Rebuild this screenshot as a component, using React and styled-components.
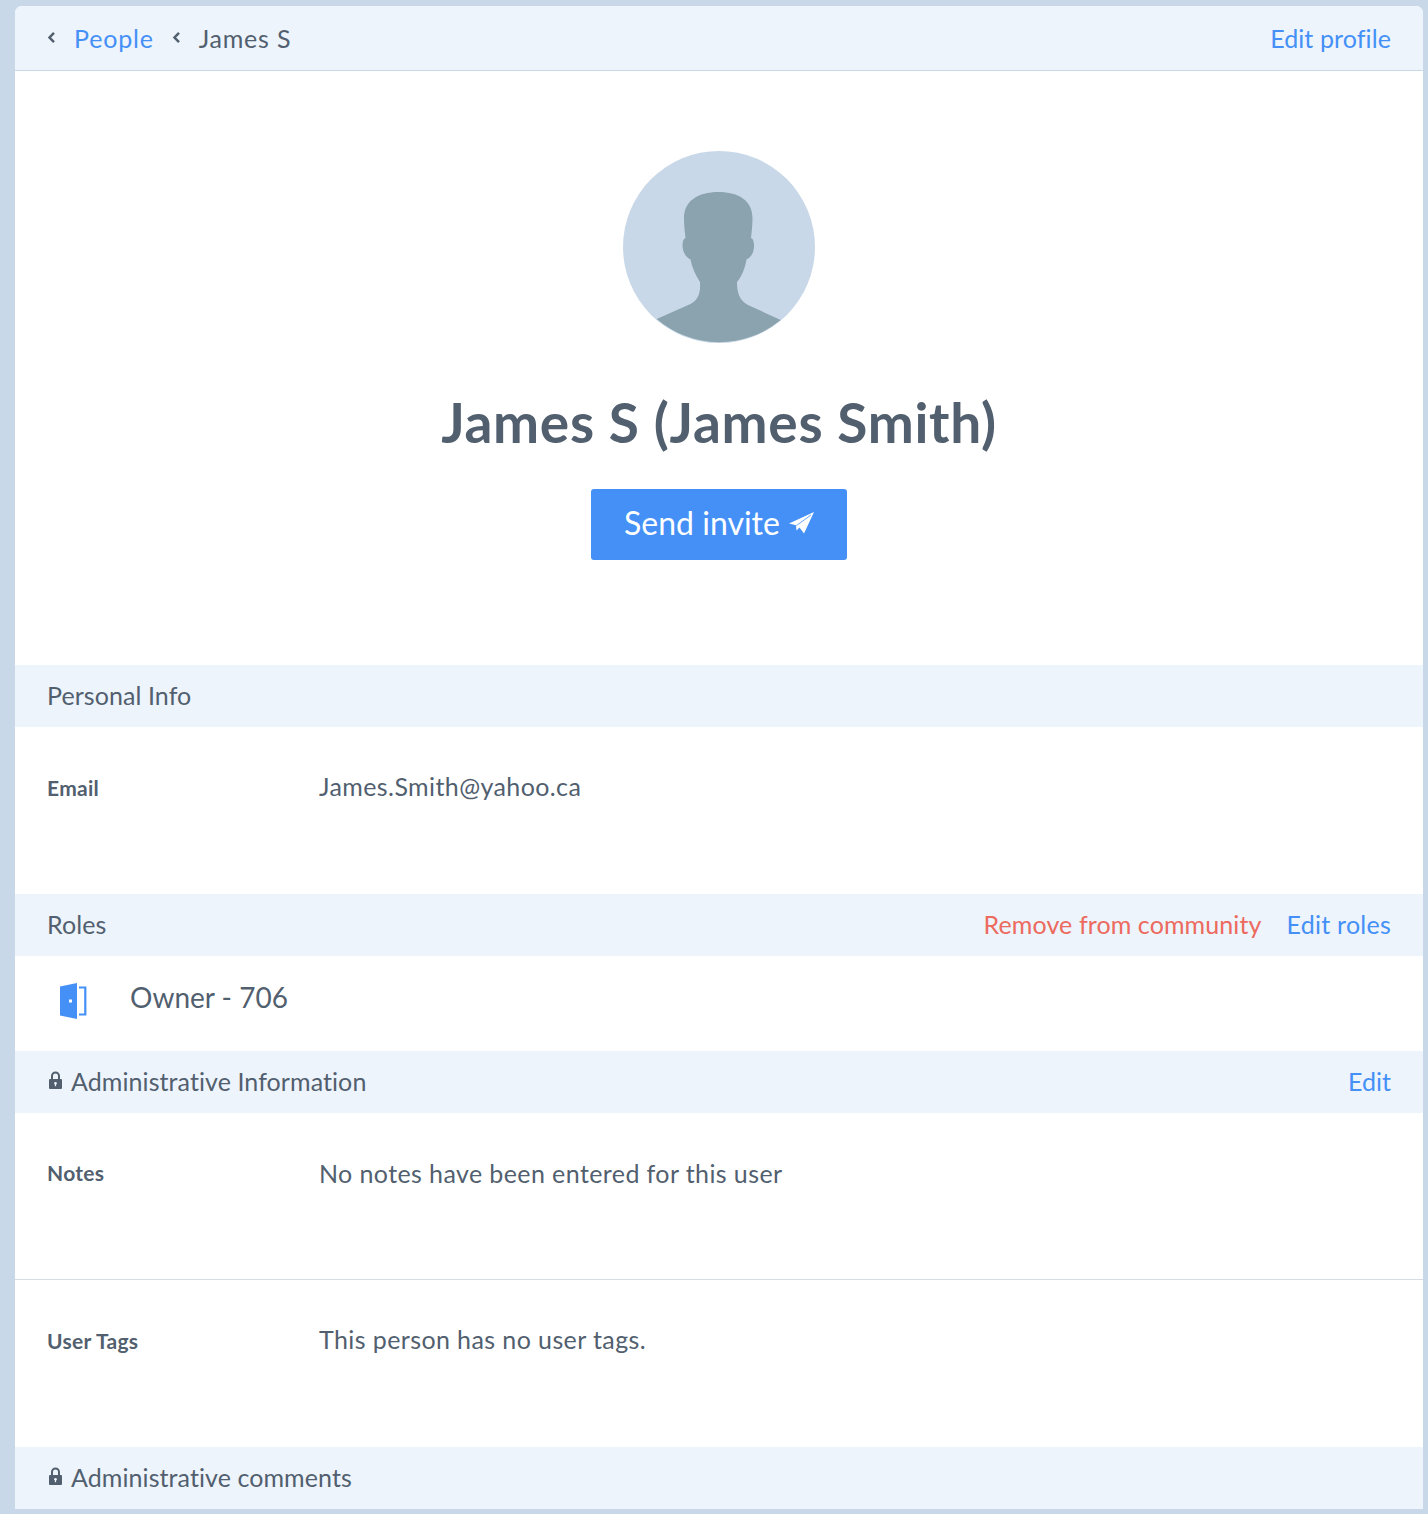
import styled, { createGlobalStyle } from "styled-components";

const GlobalStyle = createGlobalStyle`
  html, body {
    margin: 0;
    padding: 0;
    background-color: #c9d8e8;
  }
  body {
    font-family: "Lato", "Liberation Sans", sans-serif;
    font-variant-ligatures: none;
    color: #525f6f;
  }
`;

const Page = styled.div`
  width: 1428px;
  height: 1514px;
  box-sizing: border-box;
  padding: 6px 5px 5px 15px;
  overflow: hidden;
`;

const Card = styled.div`
  height: 1503px;
  background-color: #ffffff;
  border-radius: 7px 7px 0 0;
  overflow: hidden;
`;

const TopBar = styled.div`
  height: 65px;
  box-sizing: border-box;
  padding: 0 32px 1px;
  display: flex;
  justify-content: space-between;
  align-items: center;
  background-color: #edf4fc;
  border-bottom: 1px solid #c9d8e8;
  font-size: 25px;
`;

const Crumbs = styled.div`
  display: flex;
  align-items: center;
  letter-spacing: 0.8px;
`;

const Chevron = styled.svg`
  width: 9px;
  height: 13px;
  margin-right: ${(p) => p.$gap}px;
`;

const BlueLink = styled.a`
  color: #4490f7;
  font-size: 25px;
  letter-spacing: ${(p) => p.$spacing || 0}px;
  margin-right: ${(p) => p.$right || 0}px;
`;

const Hero = styled.div`
  height: 594px;
  box-sizing: border-box;
  padding-top: 80px;
  display: flex;
  flex-direction: column;
  align-items: center;
`;

const Avatar = styled.svg`
  width: 192px;
  height: 192px;
  display: block;
`;

const Title = styled.h1`
  margin: 45px 0 0;
  font-size: 55px;
  line-height: 68px;
  font-weight: 700;
  letter-spacing: 0.7px;
  color: #525f6f;
`;

const SendButton = styled.button`
  margin-top: 33px;
  width: 256px;
  height: 71px;
  padding: 0 0 4px;
  border: none;
  border-radius: 3px;
  background-color: #4490f7;
  color: #ffffff;
  font-family: inherit;
  font-size: 32px;
  display: flex;
  justify-content: center;
  align-items: center;
  gap: 9px;
`;

const PlaneIcon = styled.svg`
  width: 25px;
  height: 22px;
  display: block;
`;

const SectionBar = styled.div`
  height: 62px;
  box-sizing: border-box;
  padding: 0 32px 2px;
  display: flex;
  justify-content: space-between;
  align-items: center;
  background-color: #edf4fc;
  font-size: 25px;
`;

const SectionTitle = styled.div`
  display: flex;
  align-items: center;
  gap: 9px;
  letter-spacing: 0.08px;
`;

const LockIcon = styled.svg`
  width: 13px;
  height: 18px;
  display: block;
  margin: 0 0 2px 2px;
`;

const Actions = styled.div`
  display: flex;
  align-items: center;
`;

const DangerLink = styled.a`
  color: #ec6a5e;
  font-size: 25px;
  letter-spacing: 0.1px;
  margin-right: 25px;
`;

const FieldRow = styled.div`
  height: ${(p) => p.$height}px;
  box-sizing: border-box;
  padding: ${(p) => p.$top}px 32px 0;
  display: flex;
  border-bottom: ${(p) => (p.$divider ? "1px solid #d6dce2" : "none")};
`;

const FieldLabel = styled.div`
  width: 272px;
  flex-shrink: 0;
  padding-top: ${(p) => p.$nudge}px;
  font-size: 21px;
  line-height: 32px;
  font-weight: 700;
  letter-spacing: 0.3px;
`;

const FieldValue = styled.div`
  font-size: 25px;
  line-height: 32px;
  letter-spacing: 0.4px;
`;

const RoleRow = styled.div`
  height: 95px;
  box-sizing: border-box;
  padding: 0 0 14px 45px;
  display: flex;
  align-items: center;
`;

const DoorIcon = styled.svg`
  width: 27px;
  height: 36px;
  display: block;
  margin: 9px 43px 0 0;
`;

const RoleName = styled.div`
  font-size: 28px;
`;

const Lock = () => (
  <LockIcon viewBox="0 0 13 18">
    <path d="M3 9V5a3.500 3.500 0 0 1 7 0v4" fill="none" stroke="#525f6f" strokeWidth="2" />
    <rect x="0" y="8" width="13" height="10" rx="1" fill="#525f6f" />
    <circle cx="6.500" cy="12.200" r="1.300" fill="#edf4fc" />
    <rect x="5.900" y="12.500" width="1.200" height="2.700" fill="#edf4fc" />
  </LockIcon>
);

const BackChevron = ({ gap }) => (
  <Chevron viewBox="0 0 9 13" $gap={gap}>
    <path d="M7 1.800 2.500 6.500 7 11.200" fill="none" stroke="#525f6f" strokeWidth="2.500" />
  </Chevron>
);

const App = () => {
  return (
    <Page>
      <GlobalStyle />
      <Card>
        <TopBar>
          <Crumbs>
            <BackChevron gap={18} />
            <BlueLink $right={18} $spacing={0.8}>People</BlueLink>
            <BackChevron gap={18} />
            <span>James S</span>
          </Crumbs>
          <BlueLink $spacing={0.1}>Edit profile</BlueLink>
        </TopBar>

        <Hero>
          <Avatar viewBox="0 0 192 192">
            <circle cx="96" cy="96" r="96" fill="#c9d8e8" />
            <path
              fill="#8aa3ae"
              d="M95.500 41C75 41 61 50 61 67c0 8 1 15 1.500 20-2.500 1-3 4-3 8 .5 7 3.500 11 8 13.500 1.500 8 5 16 9.500 22.500.5 9-.5 17-9.500 22L33.700 168A96 96 0 0 0 157.700 169L125 154c-9-5-11-13-11-23 5-6 8-14 9.500-22.500 4.500-2.500 7.500-6.500 7.500-13.500 0-4-.5-7-3-8 .5-5 1.500-12 1.500-20C129.500 50 116 41 95.500 41z"
            />
          </Avatar>
          <Title>James S (James Smith)</Title>
          <SendButton>
            Send invite
            <PlaneIcon viewBox="0 0 25 22">
              <path fill="#ffffff" d="M0 11.600 25 0 15 21.600 10.500 15.500 7.500 18.500 7 13.300z" />
              <path d="M22 3 7.500 13.500" fill="none" stroke="#4490f7" strokeWidth="0.8" />
            </PlaneIcon>
          </SendButton>
        </Hero>

        <SectionBar>
          <SectionTitle>Personal Info</SectionTitle>
        </SectionBar>
        <FieldRow $height={167} $top={43}>
          <FieldLabel $nudge={2}>Email</FieldLabel>
          <FieldValue>James.Smith@yahoo.ca</FieldValue>
        </FieldRow>

        <SectionBar>
          <SectionTitle>Roles</SectionTitle>
          <Actions>
            <DangerLink>Remove from community</DangerLink>
            <BlueLink $spacing={0.25}>Edit roles</BlueLink>
          </Actions>
        </SectionBar>
        <RoleRow>
          <DoorIcon viewBox="0 0 27 36">
            <path fill="#4490f7" d="M0 3.500 17 0V36L0 32.500z" />
            <rect x="9" y="16.500" width="3" height="3" fill="#ffffff" />
            <path d="M19 4.500h6.300v27H19" fill="none" stroke="#4490f7" strokeWidth="2.200" />
          </DoorIcon>
          <RoleName>Owner - 706</RoleName>
        </RoleRow>

        <SectionBar>
          <SectionTitle>
            <Lock />
            Administrative Information
          </SectionTitle>
          <BlueLink>Edit</BlueLink>
        </SectionBar>
        <FieldRow $height={167} $top={44} $divider>
          <FieldLabel $nudge={0}>Notes</FieldLabel>
          <FieldValue>No notes have been entered for this user</FieldValue>
        </FieldRow>
        <FieldRow $height={167} $top={43}>
          <FieldLabel $nudge={2}>User Tags</FieldLabel>
          <FieldValue>This person has no user tags.</FieldValue>
        </FieldRow>

        <SectionBar>
          <SectionTitle>
            <Lock />
            Administrative comments
          </SectionTitle>
        </SectionBar>
      </Card>
    </Page>
  );
};

export default App;
